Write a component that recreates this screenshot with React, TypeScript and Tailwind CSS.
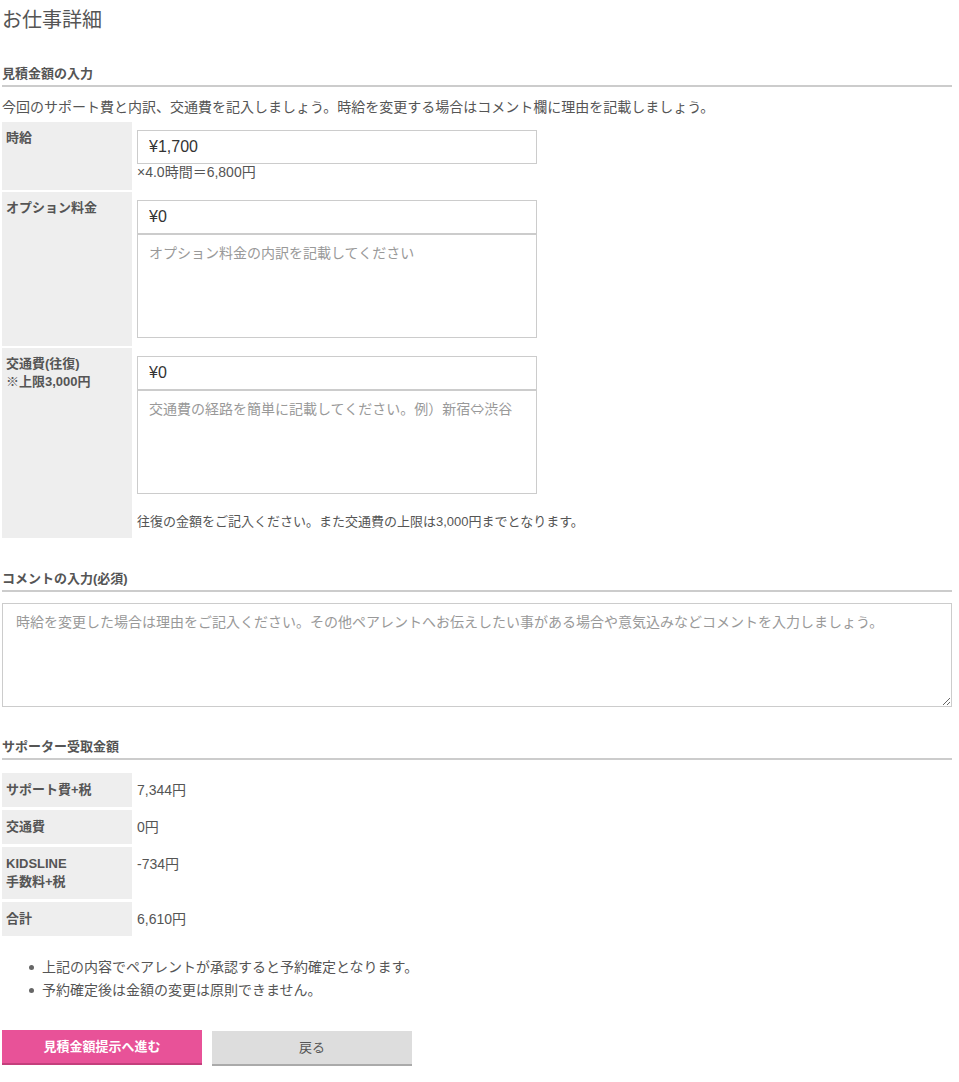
import React from "react";

const font = { fontFamily: '"Liberation Sans", "Noto Sans CJK JP", sans-serif' };
const jpFont = { fontFamily: '"Noto Sans CJK JP", "Liberation Sans", sans-serif' };

function Label({ children }: { children: React.ReactNode }) {
  return (
    <div className="w-[130px] shrink-0 bg-[#eeeeee] pl-[4px] pt-[7px] text-[13px] leading-[18px] font-bold text-[#555]">
      {children}
    </div>
  );
}

function MoneyInput({ value }: { value: string }) {
  return (
    <input
      readOnly
      value={value}
      className="block h-[34px] w-[400px] border border-[#cccccc] bg-white px-[11px] text-[16px] text-[#333] outline-none"
      style={font}
    />
  );
}

function SmallArea({ placeholder }: { placeholder: string }) {
  return (
    <textarea
      placeholder={placeholder}
      className="block h-[104px] w-[400px] resize-none border border-[#cccccc] bg-white px-[11px] pt-[7px] text-[14px] leading-[20px] text-[#333] outline-none placeholder:text-[#999]"
      style={jpFont}
    />
  );
}

function SectionHeading({ children }: { children: React.ReactNode }) {
  return (
    <div className="border-b-2 border-[#cccccc] pb-[1px] text-[13px] leading-[20px] font-bold text-[#555]">
      {children}
    </div>
  );
}

function SumRow({ label, value }: { label: React.ReactNode; value: string }) {
  return (
    <div className="flex">
      <div className="w-[130px] shrink-0 bg-[#eeeeee] pl-[4px] py-[8px] text-[13px] leading-[18px] font-bold text-[#555]">
        {label}
      </div>
      <div className="pl-[5px] pt-[8px] text-[14px] leading-[18px] text-[#555]">{value}</div>
    </div>
  );
}

export default function App() {
  return (
    <div className="min-h-[1082px] bg-white" style={font}>
      <div className="ml-[2px] w-[950px] text-[#555]">
        <h1 className="pt-[8px] text-[20px] leading-[24px] font-normal text-[#555]">お仕事詳細</h1>

        <div className="mt-[32px]">
          <SectionHeading>見積金額の入力</SectionHeading>
        </div>
        <p className="mt-[10px] text-[14px] leading-[20px] text-[#555]">
          今回のサポート費と内訳、交通費を記入しましょう。時給を変更する場合はコメント欄に理由を記載しましょう。
        </p>

        <div className="mt-[5px] flex flex-col gap-[2px]">
          <div className="flex">
            <Label>時給</Label>
            <div className="pl-[5px] pt-[8px] pb-[10px]">
              <MoneyInput value="¥1,700" />
              <div className="text-[14px] leading-[16px] text-[#555]">×4.0時間＝6,800円</div>
            </div>
          </div>
          <div className="flex">
            <Label>オプション料金</Label>
            <div className="pl-[5px] pt-[8px] pb-[8px]">
              <MoneyInput value="¥0" />
              <SmallArea placeholder="オプション料金の内訳を記載してください" />
            </div>
          </div>
          <div className="flex">
            <Label>
              交通費(往復)
              <br />
              ※上限3,000円
            </Label>
            <div className="pl-[5px] pt-[8px] pb-[6px]">
              <MoneyInput value="¥0" />
              <SmallArea placeholder="交通費の経路を簡単に記載してください。例）新宿⇔渋谷" />
              <div className="mt-[18px] text-[13px] leading-[20px] text-[#555]">
                往復の金額をご記入ください。また交通費の上限は3,000円までとなります。
              </div>
            </div>
          </div>
        </div>

        <div className="mt-[31px]">
          <SectionHeading>コメントの入力(必須)</SectionHeading>
        </div>
        <textarea
          placeholder="時給を変更した場合は理由をご記入ください。その他ペアレントへお伝えしたい事がある場合や意気込みなどコメントを入力しましょう。"
          className="mt-[11px] block h-[104px] w-[950px] border border-[#cccccc] bg-white px-[13px] pt-[7px] text-[14px] leading-[20px] text-[#333] outline-none placeholder:text-[#999]"
          style={jpFont}
        />

        <div className="mt-[30px]">
          <SectionHeading>サポーター受取金額</SectionHeading>
        </div>
        <div className="mt-[13px] flex flex-col gap-[3px]">
          <SumRow label="サポート費+税" value="7,344円" />
          <SumRow label="交通費" value="0円" />
          <SumRow
            label={
              <>
                KIDSLINE
                <br />
                手数料+税
              </>
            }
            value="-734円"
          />
          <SumRow label="合計" value="6,610円" />
        </div>

        <ul className="mt-[20px] ml-[27px] text-[14px] leading-[23px] text-[#555]">
          <li className="flex items-center gap-[8px]">
            <span className="h-[5px] w-[5px] rounded-full bg-[#666]" />
            上記の内容でペアレントが承認すると予約確定となります。
          </li>
          <li className="flex items-center gap-[8px]">
            <span className="h-[5px] w-[5px] rounded-full bg-[#666]" />
            予約確定後は金額の変更は原則できません。
          </li>
        </ul>

        <div className="mt-[28px] flex items-start gap-[10px]">
          <button
            className="h-[35px] w-[200px] border-b-2 border-[#c43f7c] bg-[#e85298] text-[13px] font-bold text-white"
            style={font}
          >
            見積金額提示へ進む
          </button>
          <button
            className="mt-[1px] h-[35px] w-[200px] border-b-2 border-[#aaaaaa] bg-[#dddddd] text-[13px] text-[#555]"
            style={font}
          >
            戻る
          </button>
        </div>
      </div>
    </div>
  );
}
